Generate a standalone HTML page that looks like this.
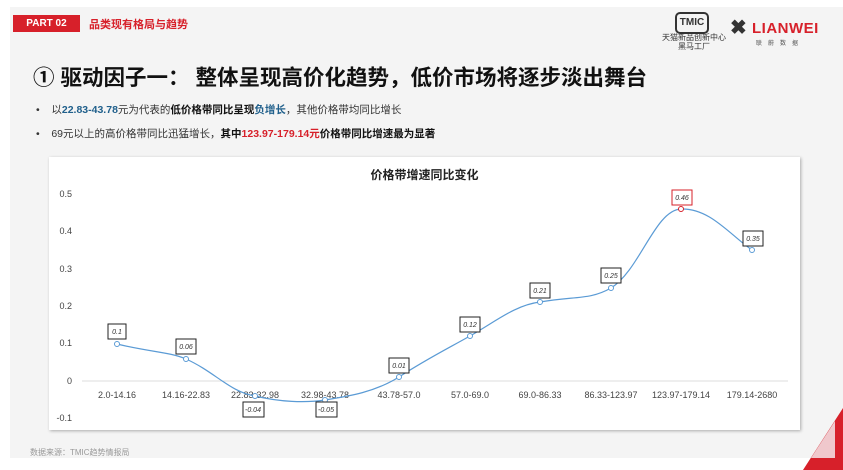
<!DOCTYPE html>
<html><head><meta charset="utf-8"><style>
body{margin:0;width:843px;height:470px;background:#fff;position:relative;overflow:hidden;font-family:"Liberation Sans","Noto Sans CJK SC",sans-serif}
.bg{position:absolute;left:10px;top:7px;width:833px;height:451px;background:#f4f4f4}
.abs{position:absolute;white-space:nowrap}
</style></head><body>
<div class="bg"></div>
<div class="abs" style="left:13px;top:15px;width:67px;height:17px;background:#d7202a;color:#fff;font-size:10px;font-weight:bold;line-height:17px;text-align:center">PART 02</div>
<div class="abs" style="left:89px;top:16px;color:#d7202a;font-size:11px;font-weight:bold">品类现有格局与趋势</div>
<div class="abs" style="left:675px;top:12px;width:30px;height:18px;border:2px solid #333;border-radius:5px;font-size:10px;font-weight:bold;line-height:18px;text-align:center;color:#333">TMIC</div>
<div class="abs" style="left:662px;top:33px;font-size:8px;line-height:9px;text-align:center;color:#333">天猫新品创新中心<br>黑马工厂</div>
<div class="abs" style="left:730px;top:18px;font-size:20px;font-weight:bold;color:#333;line-height:20px">✖</div>
<div class="abs" style="left:752px;top:20px;font-size:15px;font-weight:bold;color:#d7202a;letter-spacing:0.5px">LIANWEI</div>
<div class="abs" style="left:756px;top:38px;font-size:6px;color:#555;letter-spacing:6px">联蔚数据</div>
<div class="abs" style="left:33px;top:61px;font-size:21.5px;font-weight:bold;color:#111">① 驱动因子一： 整体呈现高价化趋势，低价市场将逐步淡出舞台</div>
<div class="abs" style="left:36px;top:102px;font-size:10.5px;color:#333">•&nbsp;&nbsp;&nbsp;&nbsp;以<b style="color:#1f5f8b">22.83-43.78</b>元为代表的<b style="color:#111">低价格带同比呈现</b><b style="color:#1f5f8b">负增长</b>，其他价格带均同比增长</div>
<div class="abs" style="left:36px;top:126px;font-size:10.5px;color:#333">•&nbsp;&nbsp;&nbsp;&nbsp;69元以上的高价格带同比迅猛增长，<b style="color:#111">其中</b><b style="color:#d7202a">123.97-179.14元</b><b style="color:#111">价格带同比增速最为显著</b></div>
<div class="abs" style="left:49px;top:157px;width:751px;height:273px;background:#fff;box-shadow:1px 1px 3px rgba(0,0,0,.3)"></div>
<div class="abs" style="left:49px;top:166px;width:751px;text-align:center;font-size:12px;font-weight:bold;color:#222">价格带增速同比变化</div>
<div class="abs" style="left:30px;top:447px;font-size:8px;color:#999">数据来源：TMIC趋势情报局</div>
<svg class="abs" style="left:0;top:0" width="843" height="470">
<g font-size="9" fill="#444" font-family="Liberation Sans,sans-serif" text-anchor="end">
<text x="72" y="197">0.5</text><text x="72" y="234">0.4</text><text x="72" y="272">0.3</text><text x="72" y="309">0.2</text><text x="72" y="346">0.1</text><text x="72" y="384">0</text><text x="72" y="421">-0.1</text>
</g>
<line x1="82" y1="381" x2="788" y2="381" stroke="#ddd"/>
<g font-size="9" fill="#444" text-anchor="middle">
<text x="117" y="398">2.0-14.16</text><text x="186" y="398">14.16-22.83</text><text x="255" y="398">22.83-32.98</text><text x="325" y="398">32.98-43.78</text><text x="399" y="398">43.78-57.0</text><text x="470" y="398">57.0-69.0</text><text x="540" y="398">69.0-86.33</text><text x="611" y="398">86.33-123.97</text><text x="681" y="398">123.97-179.14</text><text x="752" y="398">179.14-2680</text>
</g>
<path d="M117,344 C150,352 170,352 186,359 C215,372 230,392 255,396 C280,402 305,403 325,400 C350,396 375,392 399,377 C425,360 445,350 470,336 C495,322 515,305 540,302 C575,296 590,300 611,288 C640,270 655,210 681,209 C710,208 730,235 752,250" fill="none" stroke="#5b9bd5" stroke-width="1.2"/>
<g fill="#fff" stroke="#5b9bd5" stroke-width="1">
<circle cx="117" cy="344" r="2.5"/><circle cx="186" cy="359" r="2.5"/><circle cx="255" cy="396" r="2.5"/><circle cx="325" cy="400" r="2.5"/><circle cx="399" cy="377" r="2.5"/><circle cx="470" cy="336" r="2.5"/><circle cx="540" cy="302" r="2.5"/><circle cx="611" cy="288" r="2.5"/><circle cx="752" cy="250" r="2.5"/>
</g>
<circle cx="681" cy="209" r="2.5" fill="#fff" stroke="#d7202a"/>
<g font-size="7" font-style="italic" fill="#333" text-anchor="middle" stroke-width="1">
<rect x="108" y="324" width="18" height="15" fill="#fff" stroke="#222"/><text x="117" y="334">0.1</text>
<rect x="176" y="339" width="20" height="15" fill="#fff" stroke="#222"/><text x="186" y="349">0.06</text>
<rect x="243" y="402" width="21" height="15" fill="#fff" stroke="#222"/><text x="253" y="412">-0.04</text>
<rect x="316" y="402" width="21" height="15" fill="#fff" stroke="#222"/><text x="326" y="412">-0.05</text>
<rect x="389" y="358" width="20" height="15" fill="#fff" stroke="#222"/><text x="399" y="368">0.01</text>
<rect x="460" y="317" width="20" height="15" fill="#fff" stroke="#222"/><text x="470" y="327">0.12</text>
<rect x="530" y="283" width="20" height="15" fill="#fff" stroke="#222"/><text x="540" y="293">0.21</text>
<rect x="601" y="268" width="20" height="15" fill="#fff" stroke="#222"/><text x="611" y="278">0.25</text>
<rect x="672" y="190" width="20" height="15" fill="#fff" stroke="#d7202a"/><text x="682" y="200">0.46</text>
<rect x="743" y="231" width="20" height="15" fill="#fff" stroke="#222"/><text x="753" y="241">0.35</text>
</g>
<polygon points="803,470 843,470 843,408" fill="#d7202a"/>
<polygon points="811,458 835,458 835,421" fill="#f0c8cc"/>
</svg>
</body></html>
